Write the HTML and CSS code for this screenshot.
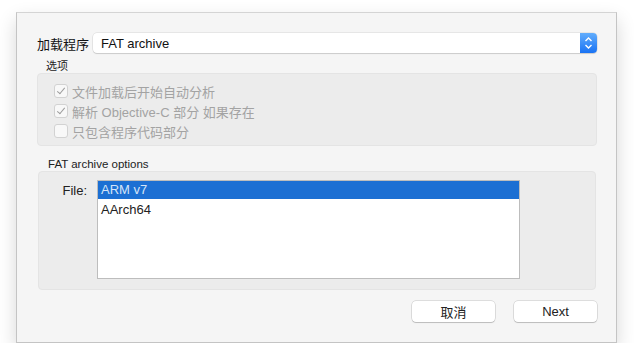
FILE: index.html
```html
<!DOCTYPE html>
<html lang="zh">
<head>
    <meta charset="UTF-8">
    <title>加载程序</title>
    <link rel="stylesheet" href="styles.css">
</head>
<body>
    <div class="dialog">
        <div class="loader-row">
            <span class="loader-label">加载程序</span>
            <div class="popup">
                <span class="popup-value">FAT archive</span>
                <span class="stepper">
                    <svg viewBox="0 0 17 20" width="17" height="20">
                        <path d="M5.5 8 L8.5 5 L11.5 8" fill="none" stroke="#fff" stroke-width="1.4"/>
                        <path d="M5.5 12 L8.5 15 L11.5 12" fill="none" stroke="#fff" stroke-width="1.4"/>
                    </svg>
                </span>
            </div>
        </div>

        <div class="group-title">选项</div>
        <div class="group options">
            <div class="check-row">
                <span class="checkbox checked"></span>
                <span>文件加载后开始自动分析</span>
            </div>
            <div class="check-row">
                <span class="checkbox checked"></span>
                <span>解析 Objective-C 部分 如果存在</span>
            </div>
            <div class="check-row">
                <span class="checkbox"></span>
                <span>只包含程序代码部分</span>
            </div>
        </div>

        <div class="group-title second">FAT archive options</div>
        <div class="group archive">
            <span class="file-label">File:</span>
            <div class="file-list">
                <div class="file-item selected">ARM v7</div>
                <div class="file-item">AArch64</div>
            </div>
        </div>

        <div class="actions">
            <button class="push-button">取消</button>
            <button class="push-button">Next</button>
        </div>
    </div>
</body>
</html>
```

FILE: styles.css
```css
body {
    margin: 0;
    background: #fff;
    font-family: 'Liberation Sans', 'Noto Sans CJK SC', sans-serif;
    font-size: 13px;
    color: #222;
}

.dialog {
    box-sizing: border-box;
    width: 601px;
    height: 331px;
    margin: 12px 0 0 16px;
    padding: 20px 19px 20px 20px;
    background: #f5f5f5;
    border: 1px solid #c4c4c4;
    border-top-color: #d4d4d4;
    box-shadow: 0 8px 18px rgba(0, 0, 0, 0.16);
    display: flex;
    flex-direction: column;
}

.loader-row {
    display: flex;
    align-items: center;
    height: 20px;
}

.loader-label {
    width: 56px;
    font-size: 13px;
    color: #111;
}

.popup {
    flex: 1;
    height: 20px;
    box-sizing: border-box;
    display: flex;
    align-items: center;
    background: #fff;
    border-radius: 4px;
    box-shadow: 0 0 0 0.5px rgba(0, 0, 0, 0.12), 0 1px 1px rgba(0, 0, 0, 0.12);
}

.popup-value {
    flex: 1;
    padding-left: 8px;
    color: #111;
}

.stepper {
    width: 17px;
    height: 20px;
    display: flex;
    border-radius: 0 4px 4px 0;
    background: linear-gradient(to bottom, #62adfc, #1a73f4);
}

.group-title {
    margin: 6px 0 0 9px;
    font-size: 11px;
    line-height: 14px;
    color: #222;
}

.group-title.second {
    margin: 11px 0 0 11px;
    font-size: 11.5px;
}

.group {
    box-sizing: border-box;
    background: #ececec;
    border: 1px solid #e4e4e4;
    border-radius: 4px;
}

.options {
    height: 73px;
    padding: 7px 0 0 16px;
}

.check-row {
    display: flex;
    align-items: center;
    gap: 4px;
    height: 20px;
    color: #a3a3a3;
}

.checkbox {
    box-sizing: border-box;
    width: 14px;
    height: 14px;
    border: 1px solid #d2d2d2;
    border-radius: 3px;
    background: #f8f8f8;
    position: relative;
}

.checkbox.checked::after {
    content: '';
    position: absolute;
    left: 4px;
    top: 1px;
    width: 3px;
    height: 7px;
    border: solid #9c9c9c;
    border-width: 0 1.5px 1.5px 0;
    transform: rotate(40deg);
}

.archive {
    height: 120px;
    margin: 0 1px;
    padding-top: 8px;
    display: flex;
    align-items: flex-start;
}

.file-label {
    width: 48px;
    text-align: right;
    margin-top: 3px;
    color: #222;
}

.file-list {
    box-sizing: border-box;
    width: 423px;
    height: 99px;
    margin-left: 10px;
    background: #fff;
    border: 1px solid #bdbdbd;
    display: flex;
    flex-direction: column;
    gap: 2px;
}

.file-item {
    height: 18px;
    line-height: 18px;
    padding-left: 3px;
    color: #222;
}

.file-item.selected {
    background: #1c6fd3;
    color: #d4e4f8;
}

.actions {
    display: flex;
    justify-content: flex-end;
    gap: 19px;
    margin-top: 11px;
}

.push-button {
    width: 83px;
    height: 21px;
    padding: 0;
    font-family: inherit;
    font-size: 13px;
    color: #222;
    background: #fff;
    border: none;
    border-radius: 4px;
    box-shadow: 0 0 0 0.5px rgba(0, 0, 0, 0.2), 0 1px 1px rgba(0, 0, 0, 0.15);
}
```
